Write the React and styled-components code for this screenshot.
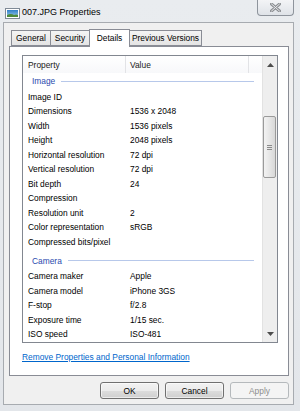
import React from "react";
import styled, { createGlobalStyle } from "styled-components";

const GlobalStyle = createGlobalStyle`
  html, body { margin: 0; padding: 0; background: #e6e9ed; }
  body { font-family: "Liberation Sans", Arial, sans-serif; }
  * { box-sizing: border-box; }
`;

const Window = styled.div`
  width: 300px;
  height: 411px;
  background: linear-gradient(#e9ecef, #e3e6ea);
  display: flex;
  flex-direction: column;
  overflow: hidden;
`;

const TitleBar = styled.div`
  height: 22px;
  display: flex;
  align-items: flex-start;
  padding-left: 5px;
`;

const TitleIcon = styled.svg`
  width: 15px;
  height: 11px;
  margin-top: 8px;
  flex: none;
`;

const TitleText = styled.div`
  font-size: 9px;
  color: #000;
  margin-left: 2px;
  margin-top: 7px;
  line-height: 11px;
  flex: 1;
`;

const CloseButton = styled.div`
  width: 37px;
  height: 16px;
  margin-right: 6px;
  border: 1px solid #8e949c;
  border-top: none;
  border-radius: 0 0 4px 4px;
  background: linear-gradient(#f3f4f6, #dfe3e8);
  display: flex;
  align-items: center;
  justify-content: center;
`;

const Client = styled.div`
  margin: 0 6px 6px 3px;
  flex: 1;
  border: 1px solid #a7abb0;
  background: #f0f0f0;
  display: flex;
  flex-direction: column;
`;

const TabRow = styled.div`
  height: 23px;
  padding: 6px 0 0 7px;
  display: flex;
  align-items: flex-end;
`;

const Tab = styled.div`
  width: ${(p) => p.$w}px;
  height: ${(p) => (p.$active ? 18 : 16)}px;
  margin-left: -1px;
  margin-bottom: ${(p) => (p.$active ? -1 : 0)}px;
  border: 1px solid #898c95;
  border-bottom: ${(p) => (p.$active ? "none" : "1px solid #898c95")};
  background: ${(p) =>
    p.$active ? "#ffffff" : "linear-gradient(#f4f4f4, #e4e4e4)"};
  position: relative;
  z-index: ${(p) => (p.$active ? 2 : 1)};
  font-size: 8.4px;
  color: #000;
  display: flex;
  align-items: center;
  justify-content: center;
  padding-bottom: ${(p) => (p.$active ? 2 : 0)}px;
  &:first-child { margin-left: 0; }
`;

const Panel = styled.div`
  margin: 0 4px 0 5px;
  height: 330px;
  border: 1px solid #898c95;
  background: #ffffff;
  padding: 8px 10px 0 12px;
  display: flex;
  flex-direction: column;
`;

const ListView = styled.div`
  height: 288px;
  border: 1px solid #828790;
  display: flex;
  background: #fff;
`;

const ListContent = styled.div`
  flex: 1;
  display: flex;
  flex-direction: column;
  overflow: hidden;
`;

const HeaderRow = styled.div`
  height: 17px;
  display: grid;
  grid-template-columns: 103px 123px 1fr;
  background: linear-gradient(#ffffff, #f7f8fa);
  font-size: 8.4px;
  color: #1a1a1a;
`;

const HeaderCell = styled.div`
  border-right: ${(p) => (p.$last ? "none" : "1px solid #e2e3e6")};
  padding-left: ${(p) => p.$pad}px;
  display: flex;
  align-items: center;
`;

const GroupHeader = styled.div`
  height: 16.5px;
  margin-top: ${(p) => (p.$first ? 0 : 3.25)}px;
  display: flex;
  align-items: center;
  padding: 0 8px 0 9px;
  font-size: 8.4px;
  color: #2a4aae;
`;

const GroupLine = styled.div`
  flex: 1;
  height: 1px;
  margin-left: 6px;
  background: #b7c8ea;
`;

const Row = styled.div`
  height: 14.5px;
  display: grid;
  grid-template-columns: 102px 1fr;
  align-items: center;
  font-size: 8.4px;
  color: #000;
`;

const Name = styled.div`
  padding-left: 5px;
  white-space: nowrap;
`;

const Value = styled.div`
  padding-left: 5px;
  white-space: nowrap;
`;

const ScrollBar = styled.div`
  width: 15px;
  background: #eeeeee;
  border-left: 1px solid #e2e2e2;
  display: flex;
  flex-direction: column;
`;

const ArrowBox = styled.div`
  height: 17px;
  display: flex;
  align-items: center;
  justify-content: center;
`;

const Track = styled.div`
  flex: 1;
  padding-left: 0px;
`;

const Thumb = styled.div`
  width: 13px;
  height: 62px;
  margin-top: 43px;
  border: 1px solid #9a9a9a;
  border-radius: 2px;
  background: linear-gradient(90deg, #f3f3f3, #e6e6e6 50%, #d8d8d8);
  display: flex;
  align-items: center;
  justify-content: center;
`;

const Grip = styled.div`
  width: 5px;
  height: 5px;
  background: repeating-linear-gradient(#8a8a8a 0 1px, transparent 1px 2px);
`;

const Link = styled.a`
  margin-top: 8px;
  font-size: 8.4px;
  line-height: 12px;
  color: #0066cc;
  text-decoration: underline;
  align-self: flex-start;
`;

const ButtonRow = styled.div`
  display: flex;
  justify-content: flex-end;
  gap: 6px;
  margin: 6px 4px 0 0;
`;

const Button = styled.div`
  width: 59px;
  height: 17px;
  border: 1px solid ${(p) => (p.$disabled ? "#b5b9bc" : "#707070")};
  border-radius: 3px;
  background: ${(p) =>
    p.$disabled
      ? "#f4f4f4"
      : "linear-gradient(#f2f2f2 0%, #ebebeb 50%, #dddddd 51%, #cfcfcf 100%)"};
  color: ${(p) => (p.$disabled ? "#8d8d8d" : "#000")};
  font-size: 8.4px;
  display: flex;
  align-items: center;
  justify-content: center;
  box-shadow: inset 0 0 0 1px ${(p) => (p.$disabled ? "transparent" : "rgba(255,255,255,0.6)")};
`;

const image = [
  ["Image ID", ""],
  ["Dimensions", "1536 x 2048"],
  ["Width", "1536 pixels"],
  ["Height", "2048 pixels"],
  ["Horizontal resolution", "72 dpi"],
  ["Vertical resolution", "72 dpi"],
  ["Bit depth", "24"],
  ["Compression", ""],
  ["Resolution unit", "2"],
  ["Color representation", "sRGB"],
  ["Compressed bits/pixel", ""],
];

const camera = [
  ["Camera maker", "Apple"],
  ["Camera model", "iPhone 3GS"],
  ["F-stop", "f/2.8"],
  ["Exposure time", "1/15 sec."],
  ["ISO speed", "ISO-481"],
];

const tabs = [
  ["General", 40],
  ["Security", 40],
  ["Details", 41],
  ["Previous Versions", 73],
];

export default function App() {
  return (
    <>
      <GlobalStyle />
      <Window>
        <TitleBar>
          <TitleIcon viewBox="0 0 15 11">
            <rect x="0.5" y="0.5" width="14" height="10" fill="#fff" stroke="#7f8a96" />
            <defs>
              <linearGradient id="sky" x1="0" y1="0" x2="0" y2="1">
                <stop offset="0" stopColor="#2f7fc9" />
                <stop offset="1" stopColor="#9ccbe9" />
              </linearGradient>
            </defs>
            <rect x="2" y="2" width="11" height="7" fill="url(#sky)" />
            <path d="M2 9 L2 7 Q6 5 9 7 Q11 6 13 7 L13 9 Z" fill="#4e8a3c" />
          </TitleIcon>
          <TitleText>007.JPG Properties</TitleText>
          <CloseButton>
            <svg width="11" height="9" viewBox="0 0 11 9">
              <path d="M1.5 1 L9.5 8 M9.5 1 L1.5 8" stroke="#8c8f93" strokeWidth="3" strokeLinecap="round" />
              <path d="M1.5 1 L9.5 8 M9.5 1 L1.5 8" stroke="#e9eaec" strokeWidth="1" strokeLinecap="round" />
            </svg>
          </CloseButton>
        </TitleBar>
        <Client>
          <TabRow>
            {tabs.map(([t, w]) => (
              <Tab key={t} $w={w} $active={t === "Details"}>
                {t}
              </Tab>
            ))}
          </TabRow>
          <Panel>
            <ListView>
              <ListContent>
                <HeaderRow>
                  <HeaderCell $pad={5}>Property</HeaderCell>
                  <HeaderCell $pad={4}>Value</HeaderCell>
                  <HeaderCell $last />
                </HeaderRow>
                <GroupHeader $first>
                  Image
                  <GroupLine />
                </GroupHeader>
                {image.map(([n, v]) => (
                  <Row key={n}>
                    <Name>{n}</Name>
                    <Value>{v}</Value>
                  </Row>
                ))}
                <GroupHeader>
                  Camera
                  <GroupLine />
                </GroupHeader>
                {camera.map(([n, v]) => (
                  <Row key={n}>
                    <Name>{n}</Name>
                    <Value>{v}</Value>
                  </Row>
                ))}
              </ListContent>
              <ScrollBar>
                <ArrowBox>
                  <svg width="7" height="4" viewBox="0 0 7 4">
                    <path d="M0 4 L3.5 0 L7 4 Z" fill="#4d4d4d" />
                  </svg>
                </ArrowBox>
                <Track>
                  <Thumb>
                    <Grip />
                  </Thumb>
                </Track>
                <ArrowBox>
                  <svg width="7" height="4" viewBox="0 0 7 4">
                    <path d="M0 0 L3.5 4 L7 0 Z" fill="#4d4d4d" />
                  </svg>
                </ArrowBox>
              </ScrollBar>
            </ListView>
            <Link>Remove Properties and Personal Information</Link>
          </Panel>
          <ButtonRow>
            <Button>OK</Button>
            <Button>Cancel</Button>
            <Button $disabled>Apply</Button>
          </ButtonRow>
        </Client>
      </Window>
    </>
  );
}
